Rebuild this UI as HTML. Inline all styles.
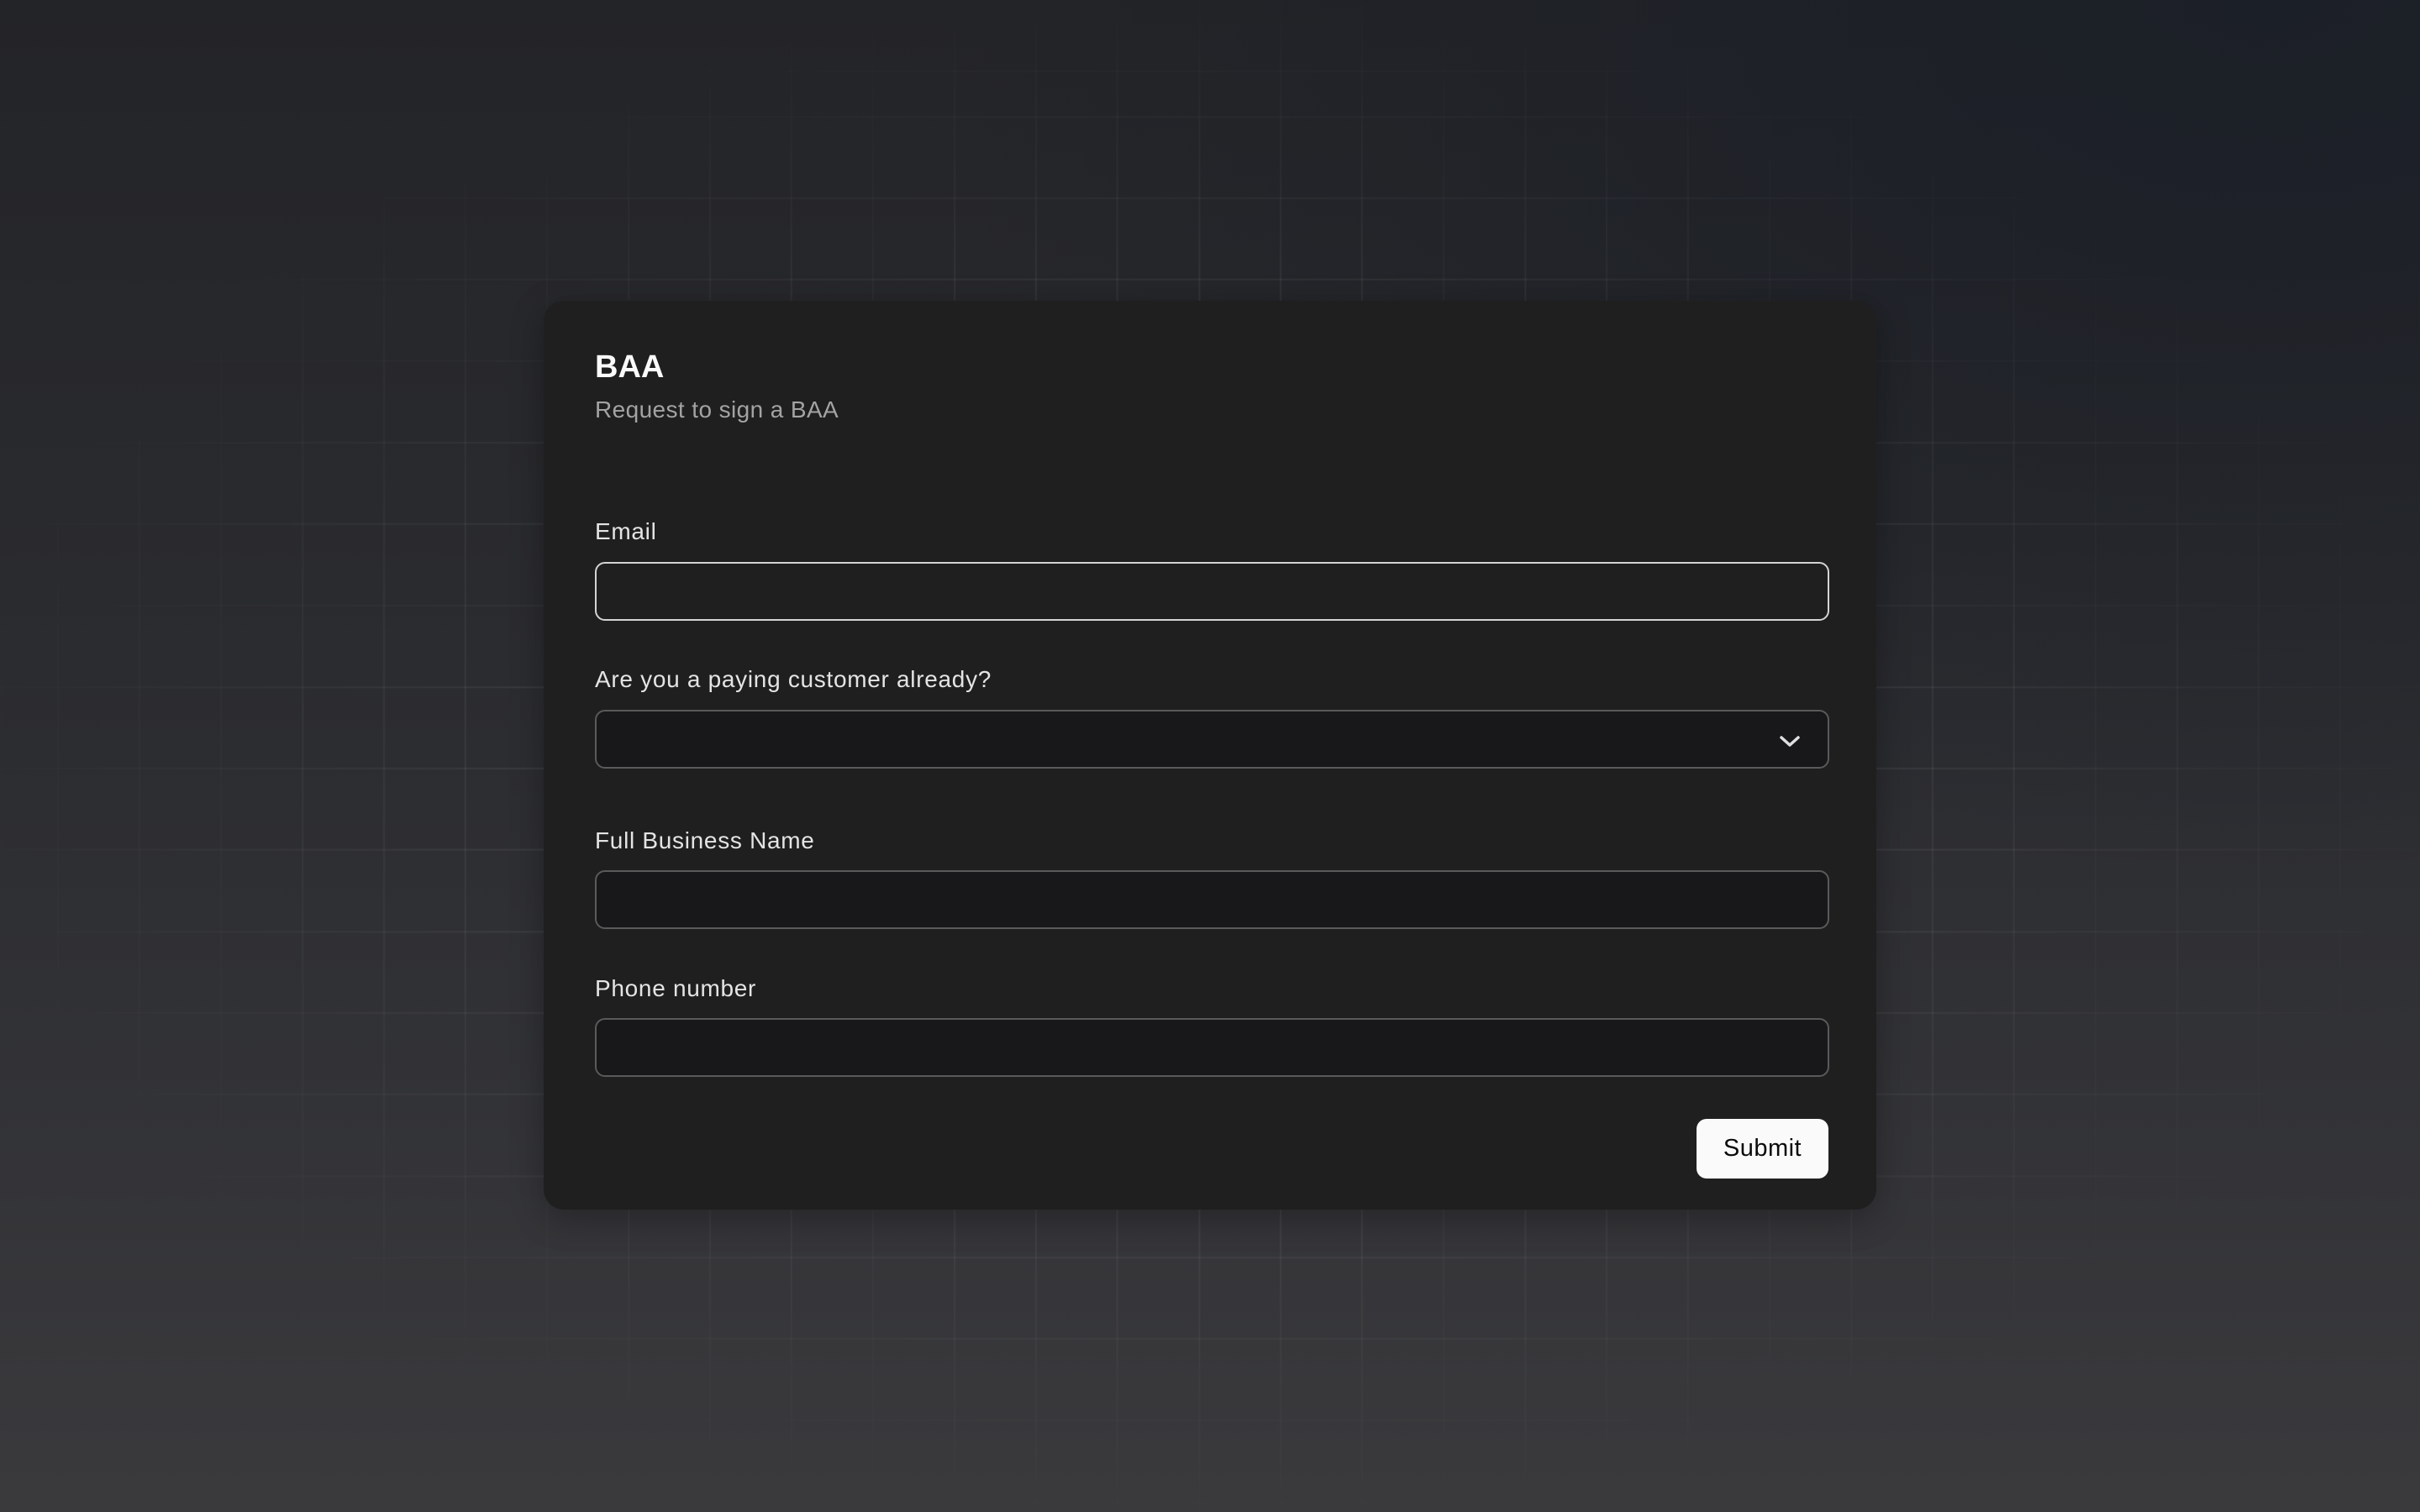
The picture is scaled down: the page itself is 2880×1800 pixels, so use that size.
<!DOCTYPE html>
<html><head><style>
html,body{margin:0;padding:0;}
body{width:2880px;height:1800px;overflow:hidden;position:relative;font-family:"Liberation Sans",sans-serif;
background:radial-gradient(ellipse 2000px 1300px at 2700px 0px,#1b1f27 0%,rgba(27,31,39,0.5) 40%,rgba(27,31,39,0) 80%),linear-gradient(180deg,#232427 0%,#2c2d31 50%,#3a3a3d 100%);}
.grid{position:absolute;inset:0;
background-image:repeating-linear-gradient(90deg,rgba(255,255,255,0.08) 0 2px,transparent 2px 97px),repeating-linear-gradient(0deg,rgba(255,255,255,0.08) 0 2px,transparent 2px 97px);
background-position:68px 0,0 86px;
-webkit-mask-image:radial-gradient(ellipse 1700px 1050px at 1440px 900px,#000 35%,transparent 90%);}
.card{position:absolute;left:647px;top:358px;width:1586px;height:1082px;background:#1f1f1f;border-radius:24px;box-shadow:0 10px 40px rgba(0,0,0,0.3);}
.abs{position:absolute;}
h1{position:absolute;left:61px;top:55px;margin:0;font-size:38px;font-weight:bold;color:#fafafa;line-height:48px;}
.sub{left:61px;top:113px;font-size:28px;color:#a3a3a3;line-height:34px;letter-spacing:0.4px;}
.lbl{left:61px;font-size:28px;color:#e4e4e4;line-height:34px;letter-spacing:0.7px;}
.inp{left:61px;height:70px;border:2px solid #5a5a5a;border-radius:12px;background:#18181a;box-sizing:border-box;width:1469px;}
.btn{left:1372px;top:974px;width:157px;height:71px;background:#fafafa;border-radius:12px;color:#0a0a0a;font-size:29px;line-height:71px;text-align:center;letter-spacing:0.5px;}
</style></head><body>
<div class="grid"></div>
<div class="card">
<h1>BAA</h1>
<div class="abs sub">Request to sign a BAA</div>
<div class="abs lbl" style="top:258px">Email</div>
<div class="abs inp" style="top:311px;border-color:#d4d4d4;background:#1f1f1f"></div>
<div class="abs lbl" style="top:434px">Are you a paying customer already?</div>
<div class="abs inp" style="top:487px"></div>
<svg class="abs" style="left:1470px;top:514px" width="26" height="20" viewBox="0 0 26 20"><path d="M3 6 L13 15 L23 6" fill="none" stroke="#e0e0e0" stroke-width="3.5" stroke-linecap="round" stroke-linejoin="round"/></svg>
<div class="abs lbl" style="top:626px">Full Business Name</div>
<div class="abs inp" style="top:678px"></div>
<div class="abs lbl" style="top:802px">Phone number</div>
<div class="abs inp" style="top:854px"></div>
<div class="abs btn">Submit</div>
</div>
</body></html>
